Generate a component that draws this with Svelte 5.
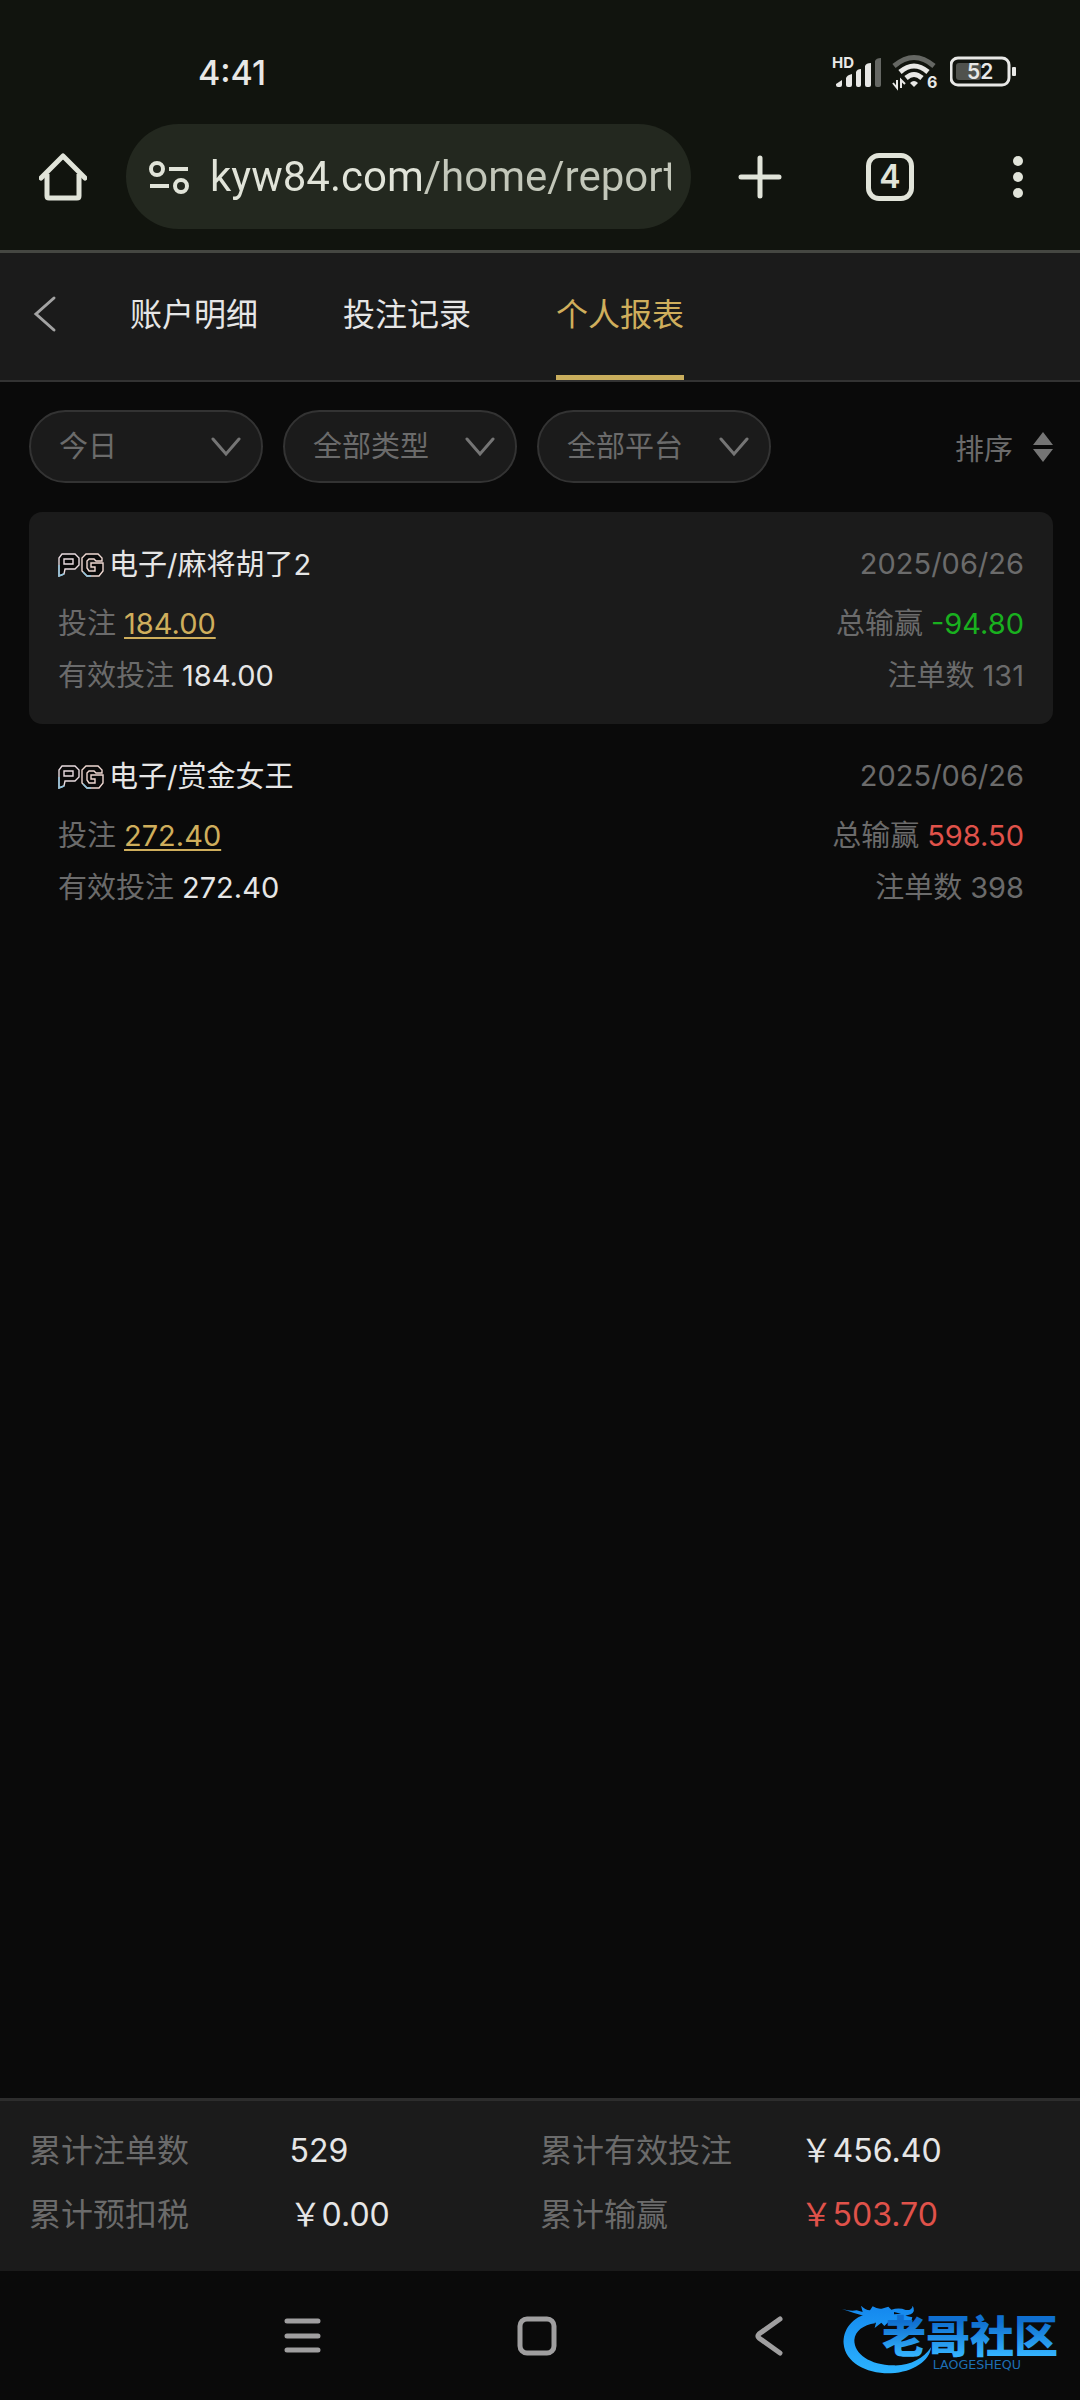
<script lang="ts">
	let address: string = 'kyw84.com/home/report';
	let active_tab: string = '个人报表';
	let tabs = ['账户明细', '投注记录', '个人报表'];
	let filters = [
		{ name: 'date', label: '日期', options: ['今日', '昨日', '近七日'] },
		{ name: 'type', label: '类型', options: ['全部类型', '电子', '棋牌'] },
		{ name: 'platform', label: '平台', options: ['全部平台', 'PG'] }
	];
	let reports = [
		{
			game: '电子/麻将胡了2',
			date: '2025/06/26',
			bet: '184.00',
			valid: '184.00',
			result: '-94.80',
			count: 131
		},
		{
			game: '电子/赏金女王',
			date: '2025/06/26',
			bet: '272.40',
			valid: '272.40',
			result: '598.50',
			count: 398
		}
	];
	let totals = [
		{ label: '累计注单数', value: '529', win: false },
		{ label: '累计有效投注', value: '\uffe5456.40', win: false },
		{ label: '累计预扣税', value: '\uffe50.00', win: false },
		{ label: '累计输赢', value: '\uffe5503.70', win: true }
	];
</script>

<div class="screen">
	<header class="browser">
		<div class="status">
			<span class="clock">4:41</span>
			<div class="status_icons">
				<svg width="50" height="40" viewBox="0 0 50 40">
					<text x="0" y="16" class="hd">HD</text>
					<g fill="#e8e8e6">
						<path d="M4 32 L10 28 V33 Q10 35 8 35 H6 Q4 35 4 33Z" />
						<path d="M14 26 Q15 23 20 22 V33 Q20 35 18 35 H16 Q14 35 14 33Z" />
						<path d="M24 20 Q25 17 29 17 V33 Q29 35 27 35 H26 Q24 35 24 33Z" />
						<path d="M33 14 Q34 11 39 11 V33 Q39 35 37 35 H35 Q33 35 33 33Z" />
					</g>
					<path fill="#656763" d="M43 9 Q44 6 49 6 V33 Q49 35 47 35 H45 Q43 35 43 33Z" />
				</svg>
				<svg width="48" height="40" viewBox="0 0 48 40" fill="none">
					<path d="M2 14 Q22 -3 42 14" stroke="#656763" stroke-width="5" />
					<path d="M8 20 Q22 8 36 20" stroke="#e8e8e6" stroke-width="5" />
					<path d="M14 26 Q22 19 30 26" stroke="#e8e8e6" stroke-width="5" />
					<path d="M18 31 Q22 27 26 31 L22 35Z" fill="#e8e8e6" />
					<path d="M5 28 V36 L1 31 M9 36 V28 L13 32" stroke="#e8e8e6" stroke-width="2" />
					<text x="35" y="36" class="wifi_six">6</text>
				</svg>
				<svg width="68" height="40" viewBox="0 0 68 40">
					<rect x="1" y="6" width="58" height="27" rx="7" fill="none" stroke="#e8e8e6" stroke-width="3" />
					<rect x="6" y="11" width="25" height="17" rx="3" fill="#50524d" />
					<rect x="62" y="15" width="4" height="9" rx="1" fill="#e8e8e6" />
					<text x="17" y="27" class="charge">52</text>
				</svg>
			</div>
		</div>
		<div class="toolbar">
			<button class="home" aria-label="主页">
				<svg width="48" height="50" viewBox="0 0 48 50" fill="none" stroke="#e1e4d9" stroke-width="5">
					<path d="M2 26 L24 4 L46 26" stroke-linecap="round" stroke-linejoin="round" />
					<path d="M8 22 V44 Q8 46 10 46 H38 Q40 46 40 44 V22" />
				</svg>
			</button>
			<div class="address">
				<svg width="42" height="36" viewBox="0 0 42 36" fill="none" stroke="#e1e4d9" stroke-width="4">
					<circle cx="9" cy="10" r="6" />
					<path d="M21 10 H40 M2 27 H21" />
					<circle cx="33" cy="27" r="6" />
				</svg>
				<input type="text" aria-label="网址" bind:value={address} />
			</div>
			<button class="tool" aria-label="新标签页">
				<svg width="44" height="44" viewBox="0 0 44 44" stroke="#e1e4d9" stroke-width="5" stroke-linecap="round">
					<path d="M22 3 V41 M3 22 H41" />
				</svg>
			</button>
			<button class="tool tab_switch" aria-label="标签页"><span class="tab_count">4</span></button>
			<button class="tool menu" aria-label="菜单">
				<svg width="12" height="44" viewBox="0 0 12 44" fill="#e1e4d9">
					<circle cx="6" cy="6" r="5" />
					<circle cx="6" cy="22" r="5" />
					<circle cx="6" cy="38" r="5" />
				</svg>
			</button>
		</div>
	</header>

	<nav class="tabs">
		<button class="back" aria-label="返回">
			<svg width="24" height="38" viewBox="0 0 24 38" fill="none" stroke="#a3a3a3" stroke-width="3" stroke-linecap="round">
				<path d="M21 3 L3 19 L21 35" />
			</svg>
		</button>
		{#each tabs as tab}
			<button class="tab" class:active={tab === active_tab} on:click={() => (active_tab = tab)}>
				{tab}
			</button>
		{/each}
	</nav>

	<main>
		<div class="filters">
			{#each filters as filter}
				<div class="filter">
					<select name={filter.name} aria-label={filter.label}>
						{#each filter.options as option}
							<option>{option}</option>
						{/each}
					</select>
					<svg width="30" height="20" viewBox="0 0 30 20" fill="none" stroke="#757575" stroke-width="3" stroke-linecap="round">
						<path d="M2 2 L15 17 L28 2" />
					</svg>
				</div>
			{/each}
			<button class="sort">
				排序
				<svg width="20" height="30" viewBox="0 0 20 30" fill="#757575">
					<path d="M10 0 L20 13 H0Z M0 17 H20 L10 30Z" />
				</svg>
			</button>
		</div>

		{#each reports as report}
			<article class="report">
				<div class="row title_row">
					<div class="title">
						<svg width="46" height="24" viewBox="0 0 46 24" fill="#0a0a0a" stroke-width="1.4">
							<path
								stroke="#e9dbe0"
								d="M1 23 V5 L4 1 H17 L21 5 V12 L17 16 H7 L6 21Z M6 6 H15 V11 H6Z"
							/>
							<path
								stroke="#f0d9d2"
								d="M28 1 H40 L44 5 V8 H38 L36 6 H31 L29 8 V15 L31 18 H37 V14 H33 V10 H45 V18 L41 23 H29 L24 18 V5Z"
							/>
							<path stroke="#8fc4de" fill="none" d="M1 12 V23 L6 21 M25 19 L29 23 H33" />
						</svg>
						<span>{report.game}</span>
					</div>
					<span>{report.date}</span>
				</div>
				<div class="row">
					<div class="pair">投注 <a href="#bets">{report.bet}</a></div>
					<div class="pair">
						总输赢
						<span class={report.result.startsWith('-') ? 'loss' : 'win'}>{report.result}</span>
					</div>
				</div>
				<div class="row">
					<div class="pair">有效投注 <span class="white">{report.valid}</span></div>
					<div class="pair">注单数 <span>{report.count}</span></div>
				</div>
			</article>
		{/each}
	</main>

	<footer>
		<dl class="totals">
			{#each totals as total}
				<div class="total">
					<dt>{total.label}</dt>
					<dd class:win={total.win}>{total.value}</dd>
				</div>
			{/each}
		</dl>
	</footer>

	<div class="system">
		<button aria-label="最近任务">
			<svg width="40" height="40" viewBox="0 0 40 40" stroke="#a09fa0" stroke-width="5" stroke-linecap="round">
				<path d="M4 5 H35 M4 20 H35 M4 34 H35" />
			</svg>
		</button>
		<button aria-label="主屏幕">
			<svg width="40" height="40" viewBox="0 0 40 40" fill="none" stroke="#a09fa0" stroke-width="5">
				<rect x="3" y="3" width="34" height="34" rx="7" />
			</svg>
		</button>
		<button aria-label="返回上一页">
			<svg width="40" height="40" viewBox="0 0 40 40" fill="none" stroke="#a09fa0" stroke-width="5" stroke-linecap="round">
				<path d="M29 3 L8 18 Q6 20 8 22 L29 37" />
			</svg>
		</button>
		<svg class="watermark" width="227" height="76" viewBox="60 60 681 228">
			<defs>
				<linearGradient id="blue" gradientUnits="userSpaceOnUse" x1="0" y1="80" x2="0" y2="275">
					<stop offset="0" stop-color="#1488ee" />
					<stop offset="1" stop-color="#2bb2ff" />
				</linearGradient>
				<linearGradient id="text_blue" gradientUnits="userSpaceOnUse" x1="0" y1="125" x2="0" y2="228">
					<stop offset="0" stop-color="#0f6fd0" />
					<stop offset="1" stop-color="#35b4ff" />
				</linearGradient>
			</defs>
			<g fill="url(#blue)">
				<path
					d="M152 98 C95 110 68 150 71 192 C76 248 140 282 213 280 C280 277 330 242 333 202 C310 236 270 258 220 256 C150 255 102 222 103 180 C105 153 130 135 165 130Z"
				/>
				<path
					d="M66 87 Q90 94 110 91 L128 96 L123 77 Q135 89 150 91 L158 79 Q172 88 185 86 L205 80 L214 89 Q238 82 257 90 Q276 92 278 77 Q288 94 272 103 L256 107 L277 112 L273 128 Q255 133 240 122 L226 123 L216 134 L206 125 L193 138 L184 128 L164 144 L168 128 L142 128 L147 112 Q105 101 66 87Z"
				/>
			</g>
			<path d="M222 96 L243 101 L222 103Z" fill="#0a0a0a" />
			<text x="186" y="220" class="mark_name" fill="url(#text_blue)">老哥社区</text>
			<text x="338" y="268" class="mark_latin" fill="#1d6fb4">LAOGESHEQU</text>
		</svg>
	</div>
</div>

<style>
	:global(body) {
		margin: 0;
		background-color: #0a0a0a;
	}

	.screen {
		display: flex;
		flex-direction: column;
		min-height: 100vh;
		font-family: Inter, 'Noto Sans CJK SC', sans-serif;
		font-size: 28px;
		color: #6b6b6b;
	}

	button {
		display: flex;
		align-items: center;
		justify-content: center;
		padding: 0;
		border: none;
		background: none;
		color: inherit;
		font: inherit;
	}

	svg {
		display: block;
		flex-shrink: 0;
	}

	.browser {
		background-color: #11140e;
		border-bottom: 3px solid #454742;
	}

	.status {
		display: flex;
		align-items: center;
		justify-content: space-between;
		height: 44px;
		padding: 50px 62px 0 198px;
	}

	.clock {
		color: #e8e8e6;
		font-size: 34px;
		font-weight: 500;
	}

	.status_icons {
		display: flex;
		gap: 10px;
	}

	.hd {
		fill: #e8e8e6;
		font-size: 15px;
		font-weight: 700;
	}

	.wifi_six {
		fill: #e8e8e6;
		font-size: 16px;
		font-weight: 700;
	}

	.charge {
		fill: #e8e8e6;
		font-size: 21px;
		font-weight: 600;
	}

	.toolbar {
		display: flex;
		align-items: center;
		padding: 30px 0 21px 39px;
	}

	.home {
		margin-right: 39px;
	}

	.address {
		display: flex;
		flex: 1;
		align-items: center;
		gap: 20px;
		min-width: 0;
		height: 105px;
		box-sizing: border-box;
		margin-right: 5px;
		padding: 0 20px 0 22px;
		border-radius: 53px;
		background-color: #23281f;
	}

	.address input {
		flex: 1;
		min-width: 0;
		height: 64px;
		padding: 0;
		border: none;
		background: linear-gradient(to right, #e1e4d9 214px, #c3c7ba 214px);
		background-clip: text;
		color: transparent;
		font-family: Roboto, sans-serif;
		font-size: 42px;
	}

	.tool {
		width: 128px;
		height: 64px;
	}

	.tab_switch {
		width: 132px;
	}

	.menu {
		width: 124px;
	}

	.tab_count {
		width: 38px;
		height: 38px;
		border: 5px solid #e1e4d9;
		border-radius: 13px;
		color: #e1e4d9;
		font-size: 32px;
		font-weight: 600;
		line-height: 38px;
	}

	.tabs {
		display: flex;
		height: 127px;
		padding-left: 33px;
		background-color: #1b1b1b;
		border-bottom: 2px solid #333;
	}

	.back {
		width: 24px;
		margin-right: 73px;
		padding-bottom: 5px;
	}

	.tab {
		margin-right: 85px;
		padding-bottom: 5px;
		border-bottom: 5px solid transparent;
		color: #e6e6e6;
		font-size: 32px;
	}

	.tab.active {
		border-bottom-color: #c9ae5d;
		color: #cfae5c;
	}

	main {
		flex: 1;
		padding: 28px 27px 28px 29px;
		font-size: 29px;
	}

	.filters {
		display: flex;
		align-items: center;
		gap: 20px;
		margin-bottom: 29px;
	}

	.filter {
		display: grid;
		align-items: center;
		width: 234px;
	}

	.filter select {
		grid-area: 1 / 1;
		width: 100%;
		height: 73px;
		padding: 0 0 0 28px;
		appearance: none;
		border: 2px solid #333;
		border-radius: 37px;
		background-color: #1b1b1b;
		color: #6b6b6b;
		font: inherit;
	}

	.filter svg {
		grid-area: 1 / 1;
		justify-self: end;
		margin-right: 22px;
		pointer-events: none;
	}

	.sort {
		gap: 20px;
		margin-left: auto;
	}

	.report {
		padding: 20px 29px 22px;
		border-radius: 13px;
	}

	.report:nth-of-type(odd) {
		background-color: #1b1b1b;
	}

	.row {
		display: flex;
		justify-content: space-between;
		height: 52px;
		line-height: 52px;
	}

	.title_row {
		height: 66px;
		line-height: 64px;
	}

	.title {
		display: flex;
		align-items: center;
		gap: 5px;
		color: #e6e6e6;
	}

	.pair {
		display: flex;
		gap: 8px;
	}

	.pair a {
		color: #cfae5c;
		text-decoration: underline;
		text-decoration-thickness: 2px;
		text-underline-offset: 3px;
	}

	.white {
		color: #e6e6e6;
	}

	.loss {
		color: #19b01f;
	}

	footer {
		padding: 18px 29px 24px;
		background-color: #1b1b1b;
		border-top: 3px solid #2d2d2d;
	}

	.totals {
		display: grid;
		grid-template-columns: 1fr 1fr;
		margin: 0;
		font-size: 32px;
		line-height: 64px;
	}

	.total {
		display: flex;
	}

	dt {
		width: 51%;
	}

	dd {
		margin: 0;
		color: #e6e6e6;
	}

	.pair .win,
	dd.win {
		color: #e0524a;
	}

	.system {
		position: relative;
		display: flex;
		align-items: center;
		justify-content: center;
		gap: 194px;
		height: 129px;
		padding-right: 6px;
	}

	.watermark {
		position: absolute;
		right: 13px;
		bottom: 24px;
	}

	.mark_name {
		font-size: 132px;
		font-weight: 900;
	}

	.mark_latin {
		font-family: 'DejaVu Sans', sans-serif;
		font-size: 38px;
	}
</style>
